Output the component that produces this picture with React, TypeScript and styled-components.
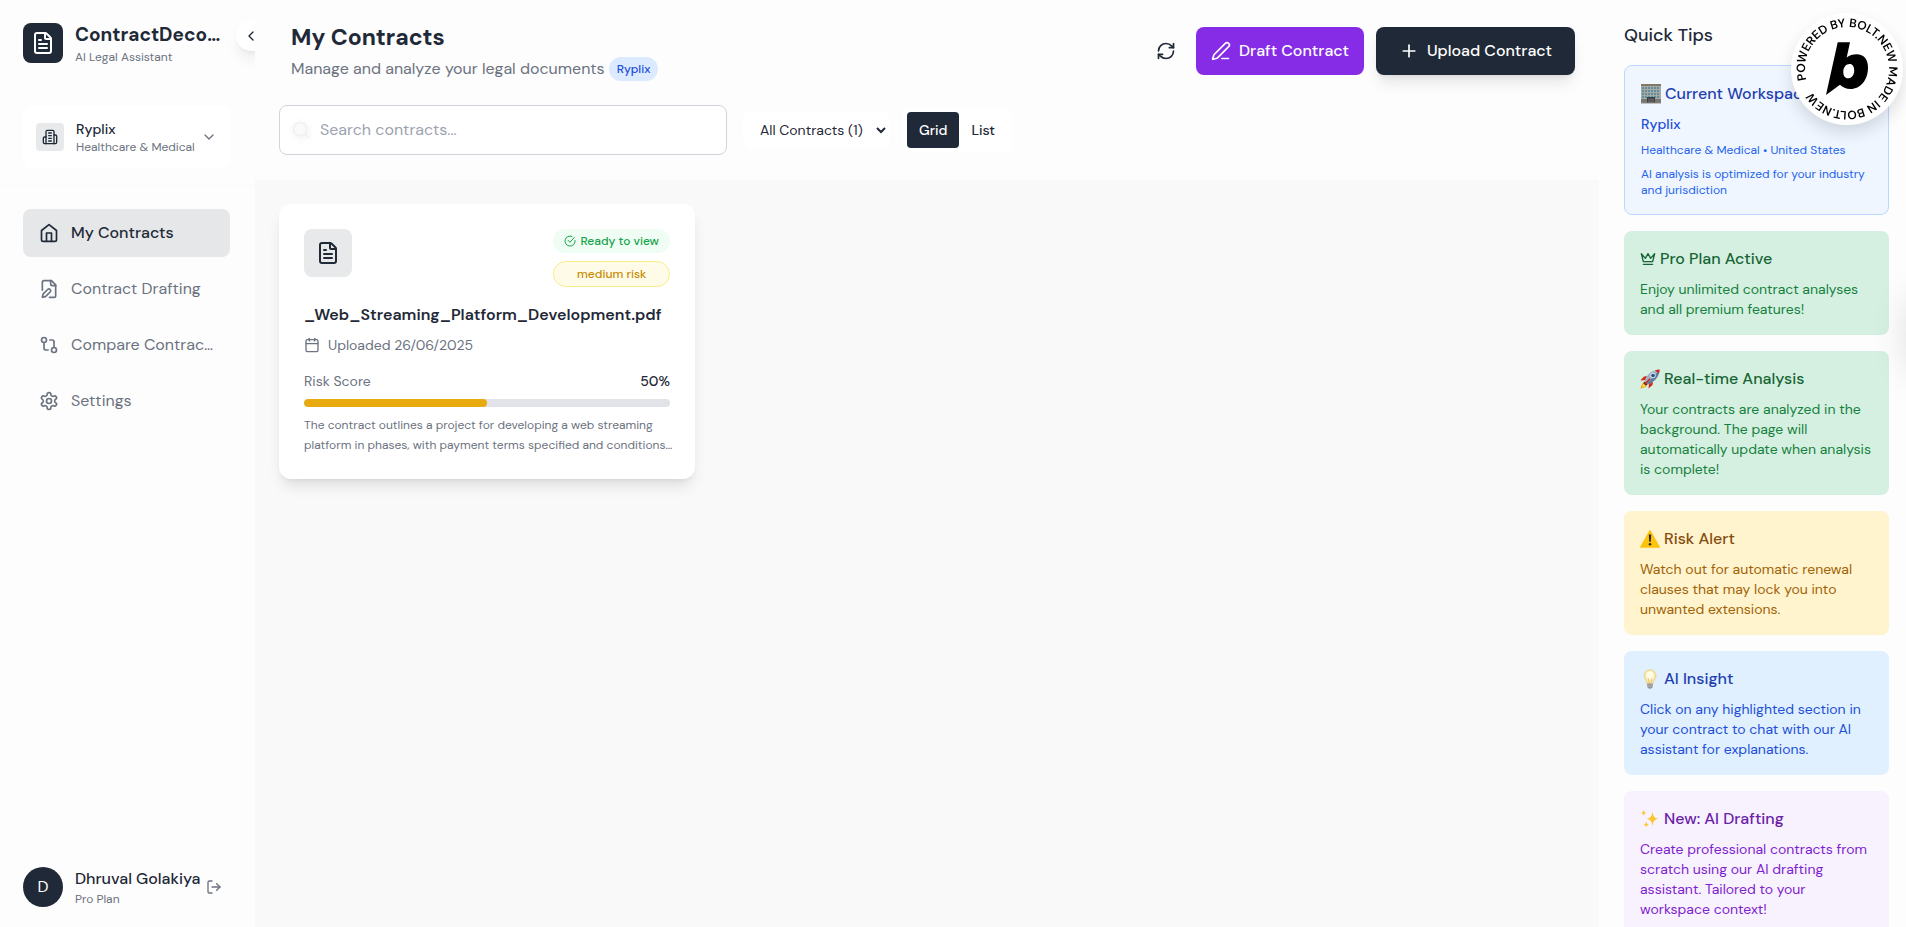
import React, { useState } from "react";
import styled, { createGlobalStyle, css } from "styled-components";
import {
  Calendar,
  ChevronDown,
  ChevronLeft,
  FileText,
  GitCompare,
  LogOut,
  PenLine,
  Plus,
  RefreshCw,
  Search,
} from "lucide-react";

const GlobalStyle = createGlobalStyle`
  * { box-sizing: border-box; }
  body {
    margin: 0;
    background: #f9f9f9;
    color: #1f2937;
    font-family: "DM Sans", Inter, "Liberation Sans", sans-serif;
    font-size: 16px;
    line-height: 24px;
    -webkit-font-smoothing: antialiased;
  }
  h1, h2, h3, p { margin: 0; }
  button, input, select { font: inherit; color: inherit; }
  button { border: 0; padding: 0; background: none; cursor: pointer; }
`;

const ink = "#1f2937";
const muted = "#6b7280";

const Shell = styled.div`
  display: flex;
  height: 100vh;
  overflow: hidden;
`;

/* ---------- Sidebar ---------- */

const Sidebar = styled.aside`
  position: relative;
  flex: 0 0 255px;
  display: flex;
  flex-direction: column;
  overflow: hidden;
  background: #fdfdfd;
`;

const CollapseButton = styled.button`
  position: absolute;
  top: 21px;
  right: -11px;
  width: 30px;
  height: 30px;
  display: grid;
  place-items: center;
  border-radius: 50%;
  background: #fff;
  box-shadow: 0 10px 15px -3px rgba(0, 0, 0, 0.08), 0 4px 6px -4px rgba(0, 0, 0, 0.08);
`;

const Brand = styled.div`
  display: flex;
  align-items: center;
  gap: 12px;
  padding: 21px 25px 41px 23px;
`;

const LogoBox = styled.div`
  flex: none;
  width: 40px;
  height: 40px;
  display: grid;
  place-items: center;
  border-radius: 8px;
  background: ${ink};
  color: #fff;
`;

const TextStack = styled.div`
  flex: 1;
  min-width: 0;
  text-align: left;
`;

const BrandName = styled.h1`
  padding-right: 4px;
  font-size: 19px;
  line-height: 28px;
  font-weight: 700;
  white-space: nowrap;
  overflow: hidden;
  text-overflow: ellipsis;
`;

const Caption = styled.div`
  font-size: 12px;
  line-height: 16px;
  color: ${muted};
  white-space: nowrap;
`;

const WorkspaceArea = styled.div`
  padding: 0 25px 17px 23px;
  border-bottom: 1px solid #fafafa;
`;

const WorkspaceButton = styled.button`
  width: 100%;
  height: 62px;
  display: flex;
  align-items: center;
  gap: 12px;
  padding: 0 13px;
  border-radius: 8px;
  background: #fff;
  svg { flex: none; }
`;

const WorkspaceIcon = styled.span`
  flex: none;
  width: 28px;
  height: 28px;
  display: grid;
  place-items: center;
  border-radius: 4px;
  background: #e8e9ea;
`;

const WorkspaceName = styled.div`
  font-size: 14px;
  line-height: 20px;
  font-weight: 500;
`;

const Nav = styled.nav`
  flex: 1;
  display: flex;
  flex-direction: column;
  gap: 8px;
  padding: 23px 25px 23px 23px;
`;

const NavLink = styled.a<{ $active?: boolean }>`
  height: 48px;
  display: flex;
  align-items: center;
  gap: 12px;
  padding: 0 16px;
  border-radius: 8px;
  color: ${muted};
  text-decoration: none;
  svg { flex: none; }
  span {
    white-space: nowrap;
    overflow: hidden;
    text-overflow: ellipsis;
  }
  ${(p) =>
    p.$active &&
    css`
      background: #e6e7e9;
      color: ${ink};
      font-weight: 500;
    `}
`;

const UserRow = styled.div`
  display: flex;
  align-items: center;
  gap: 12px;
  padding: 0 33px 20px 23px;
`;

const Avatar = styled.div`
  flex: none;
  width: 40px;
  height: 40px;
  display: grid;
  place-items: center;
  border-radius: 50%;
  background: ${ink};
  color: #fff;
`;

const UserName = styled.div`
  font-weight: 500;
  white-space: nowrap;
`;

const LogoutButton = styled.button`
  display: grid;
  place-items: center;
  color: ${muted};
`;

/* ---------- Main column ---------- */

const Main = styled.main`
  flex: 1;
  min-width: 0;
  background: #f9f9f9;
`;

const Header = styled.header`
  display: flex;
  flex-direction: column;
  gap: 24px;
  padding: 21px 24px 25px;
  background: #fdfdfd;
`;

const HeaderRow = styled.div`
  display: flex;
  align-items: center;
  justify-content: space-between;
  padding-left: 12px;
`;

const PageTitle = styled.h2`
  font-size: 23px;
  line-height: 32px;
  font-weight: 700;
`;

const Subtitle = styled.div`
  display: flex;
  align-items: center;
  gap: 4px;
  margin-top: 4px;
  color: ${muted};
`;

const WorkspaceTag = styled.span`
  padding: 4px 8px;
  border-radius: 12px;
  background: #dbeafe;
  color: #1d4ed8;
  font-size: 12px;
  line-height: 16px;
  font-weight: 500;
`;

const Actions = styled.div`
  display: flex;
  align-items: center;
  gap: 12px;
`;

const RefreshButton = styled.button`
  width: 36px;
  height: 36px;
  display: grid;
  place-items: center;
`;

const ActionButton = styled.button<{ $primary?: boolean }>`
  height: 48px;
  display: flex;
  align-items: center;
  gap: 8px;
  padding: 0 15px;
  border-radius: 8px;
  background: #862ce6;
  color: #fff;
  font-weight: 500;
  ${(p) =>
    p.$primary &&
    css`
      padding: 0 23px;
      background: ${ink};
      box-shadow: 0 10px 15px -3px rgba(0, 0, 0, 0.1), 0 4px 6px -4px rgba(0, 0, 0, 0.1);
    `}
`;

const Filters = styled.div`
  display: flex;
  align-items: center;
`;

const SearchField = styled.label`
  flex: 0 1 448px;
  height: 50px;
  display: flex;
  align-items: center;
  gap: 9px;
  padding: 0 12px 0 11px;
  border: 1px solid #d1d5db;
  border-radius: 8px;
  background: #fff;
  svg {
    flex: none;
    color: #eff1f2;
    filter: drop-shadow(0 1px 3px rgba(0, 0, 0, 0.1));
  }
`;

const SearchInput = styled.input`
  flex: 1;
  min-width: 0;
  border: 0;
  padding: 0;
  outline: 0;
  background: transparent;
  &::placeholder { color: #9ca3af; opacity: 1; }
`;

const FilterSelect = styled.select`
  width: 147px;
  height: 38px;
  margin-left: 16px;
  padding: 0 0 0 12px;
  border: 1px solid #fff;
  border-radius: 8px;
  background: #fff;
  font-size: 14px;
`;

const Toggle = styled.div`
  display: flex;
  margin-left: 12px;
  padding: 4px;
  border: 1px solid #fff;
  border-radius: 8px;
  background: #fff;
`;

const ToggleButton = styled.button<{ $on: boolean }>`
  height: 36px;
  padding: 0 12px;
  border-radius: 4px;
  background: ${(p) => (p.$on ? ink : "transparent")};
  color: ${(p) => (p.$on ? "#fff" : ink)};
  font-size: 14px;
  font-weight: 500;
`;

const CardGrid = styled.section`
  display: grid;
  grid-template-columns: repeat(3, minmax(0, 1fr));
  gap: 24px;
  padding: 24px;
`;

const ContractCard = styled.article`
  padding: 25px 25px 24px;
  border-radius: 12px;
  background: #fff;
  box-shadow: 0 10px 15px -3px rgba(0, 0, 0, 0.1), 0 4px 6px -4px rgba(0, 0, 0, 0.1);
`;

const CardTop = styled.div`
  display: flex;
  align-items: flex-start;
  justify-content: space-between;
`;

const FileBox = styled.div`
  width: 48px;
  height: 48px;
  display: grid;
  place-items: center;
  border-radius: 8px;
  background: #e8e9ea;
`;

const Badges = styled.div`
  display: flex;
  flex-direction: column;
  gap: 8px;
`;

const StatusBadge = styled.span<{ $tone: "ready" | "medium" }>`
  display: flex;
  align-items: center;
  justify-content: center;
  gap: 4px;
  padding: 4px 11px;
  border-radius: 13px;
  font-size: 12px;
  line-height: 16px;
  font-weight: 500;
  ${(p) =>
    p.$tone === "ready"
      ? css`
          background: #effdf4;
          color: #16a34a;
        `
      : css`
          border: 1px solid #fdeb86;
          background: #fefce8;
          color: #ca8a04;
        `}
`;

const FileName = styled.h3`
  margin-top: 16px;
  font-size: 16px;
  line-height: 24px;
  font-weight: 600;
  white-space: nowrap;
`;

const MetaRow = styled.div`
  display: flex;
  align-items: center;
  gap: 8px;
  margin-top: 8px;
  color: ${muted};
  font-size: 14px;
  line-height: 20px;
`;

const ScoreRow = styled.div`
  display: flex;
  justify-content: space-between;
  margin-top: 16px;
  color: ${muted};
  font-size: 14px;
  line-height: 20px;
  strong { color: ${ink}; font-weight: 500; }
`;

const Track = styled.div`
  height: 8px;
  margin: 8px 0;
  border-radius: 4px;
  background: #e2e3e8;
  overflow: hidden;
`;

const Fill = styled.div`
  height: 100%;
  border-radius: 4px;
  background: #e7ab10;
`;

const Summary = styled.p`
  margin-right: -8px;
  color: ${muted};
  font-size: 12px;
  line-height: 20px;
`;

/* ---------- Tips column ---------- */

const Tips = styled.aside`
  flex: 0 0 307px;
  display: flex;
  flex-direction: column;
  gap: 16px;
  padding: 21px 17px 16px 25px;
  background: #fdfdfd;
  overflow: hidden;
`;

const TipsTitle = styled.h2`
  font-size: 18px;
  line-height: 28px;
  font-weight: 500;
`;

type Tone = "outline" | "green" | "yellow" | "blue" | "purple";

const tones: Record<Tone, { bg: string; head: string; text: string }> = {
  outline: { bg: "#eff6ff", head: "#1e40af", text: "#2563eb" },
  green: { bg: "#d5f0e1", head: "#166534", text: "#15803d" },
  yellow: { bg: "#fff4cd", head: "#854d0e", text: "#a16207" },
  blue: { bg: "#e0f0ff", head: "#1e40af", text: "#1d4ed8" },
  purple: { bg: "#f8f2ff", head: "#6b21a8", text: "#7e22ce" },
};

const TipCard = styled.section<{ $tone: Tone }>`
  flex: none;
  padding: 16px;
  border: ${(p) => (p.$tone === "outline" ? "1px solid #b9d8fd" : "0")};
  border-radius: 8px;
  background: ${(p) => tones[p.$tone].bg};
  color: ${(p) => tones[p.$tone].text};
  font-size: 14px;
  line-height: 20px;
`;

const TipHeading = styled.h3<{ $tone: Tone }>`
  display: flex;
  align-items: center;
  gap: 4px;
  margin-bottom: 8px;
  color: ${(p) => tones[p.$tone].head};
  font-size: 16px;
  line-height: 24px;
  font-weight: 500;
  white-space: nowrap;
  svg { flex: none; }
`;

const TipStrong = styled.p`
  color: #1d4ed8;
  font-weight: 500;
`;

const TipSmall = styled.p`
  margin-top: 8px;
  font-size: 12px;
  line-height: 16px;
`;

/* ---------- Floating pieces ---------- */

const BoltBadge = styled.a`
  position: fixed;
  top: 13px;
  right: 3px;
  width: 112px;
  height: 112px;
  border-radius: 50%;
  background: #fff;
  box-shadow: 0 8px 16px rgba(0, 0, 0, 0.12);
  svg { display: block; }
`;

const EdgeTab = styled.div`
  position: fixed;
  top: 300px;
  right: -46px;
  width: 40px;
  height: 70px;
  border-radius: 8px;
  box-shadow: 0 0 40px rgba(0, 0, 0, 0.16);
`;

const stroke = {
  fill: "none",
  stroke: "currentColor",
  strokeWidth: 2,
  strokeLinecap: "round" as const,
  strokeLinejoin: "round" as const,
};

const HomeIcon = () => (
  <svg width="20" height="20" viewBox="0 0 24 24" {...stroke}>
    <path d="m3 9 9-7 9 7v11a2 2 0 0 1-2 2H5a2 2 0 0 1-2-2z" />
    <path d="M9 22V12h6v10" />
  </svg>
);

const DraftIcon = () => (
  <svg width="20" height="20" viewBox="0 0 24 24" {...stroke}>
    <path d="M12.5 22H18a2 2 0 0 0 2-2V7l-5-5H6a2 2 0 0 0-2 2v9.5" />
    <path d="M14 2v4a2 2 0 0 0 2 2h4" />
    <path d="M13.378 15.626a1 1 0 1 0-3.004-3.004l-5.01 5.012a2 2 0 0 0-.506.854l-.837 2.87a.5.5 0 0 0 .62.62l2.87-.837a2 2 0 0 0 .854-.506z" />
  </svg>
);

const SettingsIcon = () => (
  <svg width="20" height="20" viewBox="0 0 24 24" {...stroke}>
    <path d="M12.22 2h-.44a2 2 0 0 0-2 2v.18a2 2 0 0 1-1 1.73l-.43.25a2 2 0 0 1-2 0l-.15-.08a2 2 0 0 0-2.73.73l-.22.38a2 2 0 0 0 .73 2.73l.15.1a2 2 0 0 1 1 1.72v.51a2 2 0 0 1-1 1.74l-.15.09a2 2 0 0 0-.73 2.73l.22.38a2 2 0 0 0 2.73.73l.15-.08a2 2 0 0 1 2 0l.43.25a2 2 0 0 1 1 1.73V20a2 2 0 0 0 2 2h.44a2 2 0 0 0 2-2v-.18a2 2 0 0 1 1-1.73l.43-.25a2 2 0 0 1 2 0l.15.08a2 2 0 0 0 2.73-.73l.22-.39a2 2 0 0 0-.73-2.73l-.15-.08a2 2 0 0 1-1-1.74v-.5a2 2 0 0 1 1-1.74l.15-.09a2 2 0 0 0 .73-2.73l-.22-.38a2 2 0 0 0-2.73-.73l-.15.08a2 2 0 0 1-2 0l-.43-.25a2 2 0 0 1-1-1.73V4a2 2 0 0 0-2-2z" />
    <circle cx="12" cy="12" r="3" />
  </svg>
);

const BuildingIcon = () => (
  <svg width="16" height="16" viewBox="0 0 24 24" {...stroke}>
    <path d="M6 22V4a2 2 0 0 1 2-2h8a2 2 0 0 1 2 2v18Z" />
    <path d="M6 12H4a2 2 0 0 0-2 2v6a2 2 0 0 0 2 2h2" />
    <path d="M18 9h2a2 2 0 0 1 2 2v9a2 2 0 0 1-2 2h-2" />
    <path d="M10 6h4M10 10h4M10 14h4M10 18h4" />
  </svg>
);

const CheckIcon = () => (
  <svg width="12" height="12" viewBox="0 0 24 24" {...stroke}>
    <path d="M22 11v1a10 10 0 1 1-6-9.1" />
    <path d="m8 10.5 4 4L20.5 5" />
  </svg>
);

const CrownIcon = () => (
  <svg width="16" height="16" viewBox="0 0 24 24" {...stroke}>
    <path d="m2 4 3 12h14l3-12-6 7-4-7-4 7-6-7zm3 16h14" />
  </svg>
);

const OfficeIcon = () => (
  <svg width="20" height="20" viewBox="0 0 20 20">
    <rect x="0" y="1" width="20" height="18" fill="#a8aaa0" />
    <rect x="0" y="0" width="20" height="2" fill="#7f7869" />
    {[3, 6, 9, 12].map((y) =>
      [1, 4, 7, 10, 13, 16].map((x) => (
        <rect key={`${x}-${y}`} x={x} y={y} width="2" height="2" fill="#5f8ea6" />
      )),
    )}
    <rect x="0" y="15" width="20" height="4" fill="#77786f" />
    <rect x="6" y="13" width="8" height="6" fill="#3e3f42" />
    <path d="M8 14.5v4.5M10 14.5v4.5M12 14.5v4.5" stroke="#8c8f92" strokeWidth=".7" />
    <path d="M0 19h20" stroke="#8f8c83" />
  </svg>
);

const RocketIcon = () => (
  <svg width="20" height="20" viewBox="0 0 20 20">
    <path d="M7 12.5 3.5 13 1 17.5.5 19.5 3 19l4-2z" fill="#f79a17" />
    <path d="M6 14 3 15.5 2 18.5 5.5 17z" fill="#ffe04d" />
    <path d="M8 7 4 7.5.3 11.5 6 11zM13 12l-.5 4-4 3.5L9 14z" fill="#d7281c" />
    <path d="M4.5 12.5C6 6 11.5 1 19.5.5 19.3 8 14 13.5 7.5 15.5z" fill="#9fb4c7" />
    <path d="M7 13.8C11 10.5 15.5 6 19.5.5 19.3 8 14 13.5 7.5 15.5z" fill="#5f7f9e" />
    <path d="M15 1.3c1.5-.5 3-.8 4.5-.8 0 1.5-.2 3-.7 4.3z" fill="#d7281c" />
    <circle cx="13" cy="6.5" r="2.3" fill="#2b4f86" stroke="#e6edf3" />
    <path d="m4.5 12.5 3 3-2 1-2-2z" fill="#6a2a22" />
    <path d="m5.5 14.5 4.5-4.8" stroke="#d7281c" strokeWidth="1.5" />
  </svg>
);

const WarningIcon = () => (
  <svg width="20" height="20" viewBox="0 0 20 20">
    <path d="M10 1.8 19.2 18H.8z" fill="#fdc30d" stroke="#fdc30d" strokeWidth="1.5" strokeLinejoin="round" />
    <path d="M8.8 5.5h2.4l-.4 7.2H9.2z" fill="#2d2a22" />
    <circle cx="10" cy="15.3" r="1.3" fill="#2d2a22" />
  </svg>
);

const BulbIcon = () => (
  <svg width="20" height="20" viewBox="0 0 20 20">
    <path d="M10 .8c3.5 0 6 2.5 6 5.8 0 3.2-2.6 4.5-3 8.4H7c-.4-3.9-3-5.2-3-8.4C4 3.3 6.5.8 10 .8z" fill="#f8e6a0" stroke="#e2cd8b" strokeWidth=".7" />
    <ellipse cx="10" cy="6.5" rx="3.8" ry="4.2" fill="#fffbe6" />
    <path d="M9 14.5 8.3 9M11 14.5l.7-5.5" stroke="#dcb960" strokeWidth=".6" />
    <path d="M7.2 14.5h5.6v3.3c-.5 1.2-1.5 1.9-2.8 1.9s-2.3-.7-2.8-1.9z" fill="#8d8f91" />
    <path d="M7.2 16h5.6M7.4 17.7h5.2" stroke="#c8cacc" strokeWidth=".6" />
  </svg>
);

const SparklesIcon = () => (
  <svg width="20" height="20" viewBox="0 0 20 20" fill="#fdc62f">
    <path d="M12.5 2.5c.7 4.8 2 6.5 6 7.3-4 .8-5.3 2.5-6 7.3-.7-4.8-2-6.5-6-7.3 4-.8 5.3-2.5 6-7.3z" />
    <path d="M3.7.8c.4 2 .9 2.7 2.7 3.1-1.8.4-2.3 1.1-2.7 3.1C3.3 5 2.8 4.3 1 3.9c1.8-.4 2.3-1.1 2.7-3.1z" />
    <path d="M6.3 12.5c.4 2 1 2.8 2.8 3.2-1.8.4-2.4 1.1-2.8 3.1-.4-2-1-2.7-2.8-3.1 1.8-.4 2.4-1.2 2.8-3.2z" />
  </svg>
);

const BoltSeal = () => (
  <svg width="112" height="112" viewBox="0 0 112 112" role="img" aria-label="Powered by Bolt.new">
    <defs>
      <path id="ring" d="M15.4 66.9A42 42 0 1 1 96.6 45.1A42 42 0 1 1 15.4 66.9" />
    </defs>
    <text fontSize="12" fontWeight="600" fill="#000">
      <textPath href="#ring">POWERED BY BOLT.NEW MADE IN BOLT.NEW</textPath>
    </text>
    <path
      fillRule="evenodd"
      d="M46.7 29.2H59L55.7 44.5C58.5 42.3 62 41.3 65.5 41.3C73 41.3 77 46.5 77 54.5C77 67 69.5 76 59.5 76C55 76 51.5 74.5 49 71.8L35 82ZM58.8 51C54.8 51 52.3 54.5 52.3 59C52.3 63 54.3 65.3 57 65.3C60.8 65.3 63.2 62 63.2 57.5C63.2 53.5 61.5 51 58.8 51Z"
    />
  </svg>
);

const navItems = [
  { label: "My Contracts", icon: <HomeIcon />, active: true },
  { label: "Contract Drafting", icon: <DraftIcon /> },
  { label: "Compare Contracts", icon: <GitCompare size={20} /> },
  { label: "Settings", icon: <SettingsIcon /> },
];

const tips: { tone: Tone; title: string; icon: React.ReactNode; body: string }[] = [
  {
    tone: "green",
    title: "Pro Plan Active",
    icon: <CrownIcon />,
    body: "Enjoy unlimited contract analyses and all premium features!",
  },
  {
    tone: "green",
    title: "Real-time Analysis",
    icon: <RocketIcon />,
    body: "Your contracts are analyzed in the background. The page will automatically update when analysis is complete!",
  },
  {
    tone: "yellow",
    title: "Risk Alert",
    icon: <WarningIcon />,
    body: "Watch out for automatic renewal clauses that may lock you into unwanted extensions.",
  },
  {
    tone: "blue",
    title: "AI Insight",
    icon: <BulbIcon />,
    body: "Click on any highlighted section in your contract to chat with our AI assistant for explanations.",
  },
  {
    tone: "purple",
    title: "New: AI Drafting",
    icon: <SparklesIcon />,
    body: "Create professional contracts from scratch using our AI drafting assistant. Tailored to your workspace context!",
  },
];

export default function App() {
  const [view, setView] = useState<"Grid" | "List">("Grid");
  const score = 50;

  return (
    <>
      <GlobalStyle />
      <Shell>
        <Sidebar>
          <Brand>
            <LogoBox>
              <FileText size={24} />
            </LogoBox>
            <TextStack>
              <BrandName>ContractDecoder</BrandName>
              <Caption>AI Legal Assistant</Caption>
            </TextStack>
          </Brand>
          <CollapseButton aria-label="Collapse sidebar">
            <ChevronLeft size={16} />
          </CollapseButton>
          <WorkspaceArea>
            <WorkspaceButton>
              <WorkspaceIcon>
                <BuildingIcon />
              </WorkspaceIcon>
              <TextStack>
                <WorkspaceName>Ryplix</WorkspaceName>
                <Caption>Healthcare &amp; Medical</Caption>
              </TextStack>
              <ChevronDown size={16} color={muted} />
            </WorkspaceButton>
          </WorkspaceArea>
          <Nav>
            {navItems.map((item) => (
              <NavLink key={item.label} href="#" $active={item.active}>
                {item.icon}
                <span>{item.label}</span>
              </NavLink>
            ))}
          </Nav>
          <UserRow>
            <Avatar>D</Avatar>
            <TextStack>
              <UserName>Dhruval Golakiya</UserName>
              <Caption>Pro Plan</Caption>
            </TextStack>
            <LogoutButton aria-label="Log out">
              <LogOut size={16} />
            </LogoutButton>
          </UserRow>
        </Sidebar>

        <Main>
          <Header>
            <HeaderRow>
              <div>
                <PageTitle>My Contracts</PageTitle>
                <Subtitle>
                  Manage and analyze your legal documents
                  <WorkspaceTag>Ryplix</WorkspaceTag>
                </Subtitle>
              </div>
              <Actions>
                <RefreshButton aria-label="Refresh">
                  <RefreshCw size={20} />
                </RefreshButton>
                <ActionButton>
                  <PenLine size={20} />
                  Draft Contract
                </ActionButton>
                <ActionButton $primary>
                  <Plus size={20} />
                  Upload Contract
                </ActionButton>
              </Actions>
            </HeaderRow>
            <Filters>
              <SearchField>
                <Search size={20} />
                <SearchInput type="text" aria-label="Search contracts" placeholder="Search contracts..." />
              </SearchField>
              <FilterSelect aria-label="Filter contracts">
                <option>All Contracts (1)</option>
              </FilterSelect>
              <Toggle>
                {(["Grid", "List"] as const).map((v) => (
                  <ToggleButton key={v} $on={view === v} onClick={() => setView(v)}>
                    {v}
                  </ToggleButton>
                ))}
              </Toggle>
            </Filters>
          </Header>
          <CardGrid>
            <ContractCard>
              <CardTop>
                <FileBox>
                  <FileText size={24} />
                </FileBox>
                <Badges>
                  <StatusBadge $tone="ready">
                    <CheckIcon />
                    Ready to view
                  </StatusBadge>
                  <StatusBadge $tone="medium">medium risk</StatusBadge>
                </Badges>
              </CardTop>
              <FileName>_Web_Streaming_Platform_Development.pdf</FileName>
              <MetaRow>
                <Calendar size={16} />
                Uploaded 26/06/2025
              </MetaRow>
              <ScoreRow>
                <span>Risk Score</span>
                <strong>{score}%</strong>
              </ScoreRow>
              <Track>
                <Fill style={{ width: `${score}%` }} />
              </Track>
              <Summary>
                The contract outlines a project for developing a web streaming platform in phases, with
                payment terms specified and conditions…
              </Summary>
            </ContractCard>
          </CardGrid>
        </Main>

        <Tips>
          <TipsTitle>Quick Tips</TipsTitle>
          <TipCard $tone="outline">
            <TipHeading $tone="outline">
              <OfficeIcon />
              Current Workspace
            </TipHeading>
            <TipStrong>Ryplix</TipStrong>
            <TipSmall>Healthcare &amp; Medical • United States</TipSmall>
            <TipSmall>AI analysis is optimized for your industry and jurisdiction</TipSmall>
          </TipCard>
          {tips.map((tip) => (
            <TipCard key={tip.title} $tone={tip.tone}>
              <TipHeading $tone={tip.tone}>
                {tip.icon}
                {tip.title}
              </TipHeading>
              <p>{tip.body}</p>
            </TipCard>
          ))}
        </Tips>
      </Shell>
      <EdgeTab />
      <BoltBadge href="#">
        <BoltSeal />
      </BoltBadge>
    </>
  );
}
